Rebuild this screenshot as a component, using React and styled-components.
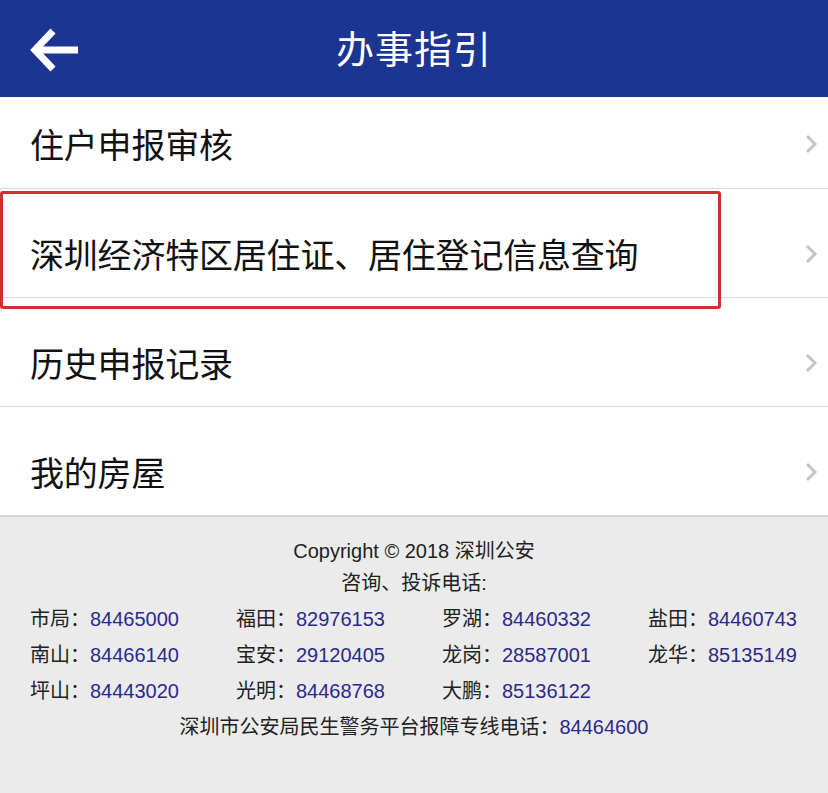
import React from 'react'
import styled, { createGlobalStyle } from 'styled-components'

const GlobalStyle = createGlobalStyle`
  html, body {
    margin: 0;
    padding: 0;
    background: #ebebeb;
    font-family: "Liberation Sans", "Noto Sans CJK SC", sans-serif;
  }
`

const Page = styled.div`
  width: 828px;
  min-height: 793px;
  background: #ebebeb;
`

const Header = styled.div`
  height: 97px;
  background: #1c3592;
  display: flex;
  align-items: center;
  justify-content: center;
  position: relative;
`

const BackButton = styled.div`
  position: absolute;
  left: 28px;
  top: 26px;
  width: 52px;
  height: 48px;
`

const Title = styled.h1`
  margin: 0;
  color: #fff;
  font-family: "Noto Sans CJK SC", sans-serif;
  font-weight: 400;
  font-size: 38px;
  letter-spacing: 1px;
  padding-bottom: 4px;
`

const List = styled.div`
  background: #fff;
`

const Row = styled.div`
  position: relative;
  height: ${p => (p.compact ? 92 : 109)}px;
  padding: ${p => (p.compact ? '2px' : '21px')} 10px 0 30px;
  box-sizing: border-box;
  display: flex;
  align-items: center;
  justify-content: space-between;
  border-bottom: 1px solid #d9d9d9;
`

const RowLabel = styled.span`
  font-family: "Noto Sans CJK SC", sans-serif;
  font-size: 34px;
  color: #111;
  letter-spacing: -0.2px;
`

const Highlight = styled.div`
  position: absolute;
  left: 0;
  top: 2px;
  width: 721px;
  height: 118px;
  box-sizing: border-box;
  border: 3px solid #cf2f2f;
  border-radius: 3px;
  pointer-events: none;
`

const Footer = styled.div`
  padding: 18px 0 40px;
  border-top: 1px solid #d2d2d2;
  background: #ebebeb;
  font-family: "Liberation Sans", "Noto Sans CJK SC", sans-serif;
  font-size: 20px;
  color: #222;
`

const Line = styled.div`
  text-align: center;
  height: ${p => p.h || 32}px;
  line-height: ${p => p.h || 32}px;
`

const Grid = styled.div`
  display: grid;
  grid-template-columns: repeat(4, 206px);
  padding-left: 30px;
  margin-top: 2px;
`

const Cell = styled.div`
  height: 36px;
  line-height: 36px;
  white-space: nowrap;
`

const Phone = styled.span`
  color: #2b2a8a;
`

const Chevron = () => (
  <svg width="14" height="20" viewBox="0 0 14 20">
    <polyline points="3,2 11,10 3,18" fill="none" stroke="#c4c4c8" strokeWidth="3" />
  </svg>
)

const BackArrow = () => (
  <svg width="52" height="48" viewBox="0 0 52 48">
    <g fill="none" stroke="#fff" strokeWidth="7">
      <line x1="8" y1="24" x2="50" y2="24" />
      <polyline points="25,5 7,24 25,43" />
    </g>
  </svg>
)

const items = [
  '住户申报审核',
  '深圳经济特区居住证、居住登记信息查询',
  '历史申报记录',
  '我的房屋',
]

const phones = [
  ['市局', '84465000'],
  ['福田', '82976153'],
  ['罗湖', '84460332'],
  ['盐田', '84460743'],
  ['南山', '84466140'],
  ['宝安', '29120405'],
  ['龙岗', '28587001'],
  ['龙华', '85135149'],
  ['坪山', '84443020'],
  ['光明', '84468768'],
  ['大鹏', '85136122'],
]

export default function App() {
  return (
    <>
      <GlobalStyle />
      <Page>
        <Header>
          <BackButton><BackArrow /></BackButton>
          <Title>办事指引</Title>
        </Header>
        <List>
          {items.map((item, i) => (
            <Row key={item} compact={i === 0}>
              <RowLabel>{item}</RowLabel>
              <Chevron />
              {i === 1 && <Highlight />}
            </Row>
          ))}
        </List>
        <Footer>
          <Line>Copyright © 2018 深圳公安</Line>
          <Line>咨询、投诉电话:</Line>
          <Grid>
            {phones.map(([area, num]) => (
              <Cell key={area}>{area}：<Phone>{num}</Phone></Cell>
            ))}
          </Grid>
          <Line h={36}>深圳市公安局民生警务平台报障专线电话：<Phone>84464600</Phone></Line>
        </Footer>
      </Page>
    </>
  )
}
